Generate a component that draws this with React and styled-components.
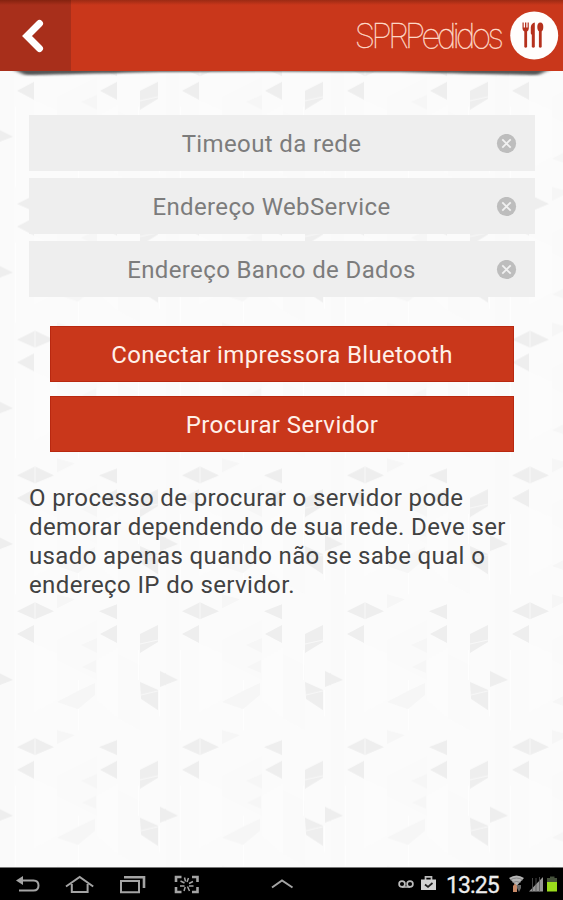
import React from "react";
import styled, { createGlobalStyle } from "styled-components";

const GlobalStyle = createGlobalStyle`
  * {
    box-sizing: border-box;
  }

  body {
    margin: 0;
    font-family: Roboto, "Noto Sans", sans-serif;
  }
`;

const StyledScreen = styled.div`
  position: relative;
  display: flex;
  flex-direction: column;
  width: 563px;
  height: 900px;
  overflow: hidden;
  background: #fbfbfb;
`;

const StyledBackdrop = styled.svg`
  position: absolute;
  top: 0;
  left: 0;
`;

const StyledHeader = styled.header`
  position: relative;
  display: flex;
  align-items: center;
  flex: none;
  height: 71px;
  padding-right: 4px;
  background: linear-gradient(#9c2a14 0, #c9371b 5px, #c9371b 100%);
`;

const StyledShadow = styled.svg`
  position: absolute;
  top: 70px;
  left: 0;
`;

const StyledBack = styled.button`
  display: flex;
  align-items: center;
  width: 71px;
  height: 71px;
  padding: 0 0 0 20px;
  border: 0;
  background: linear-gradient(#84220f 0, #a82f1b 5px, #a82f1b 100%);
`;

const StyledLogo = styled.span`
  margin-left: auto;
  margin-right: 10px;
  color: #ffdccb;
  font-family: Inter, sans-serif;
  font-size: 34px;
  font-weight: 100;
  line-height: 40px;
  letter-spacing: -4px;
  white-space: nowrap;
  -webkit-text-stroke: 0.3px #ffdccb;
`;

const StyledMain = styled.main`
  position: relative;
  flex: 1;
  padding: 44px 28px 0 29px;
`;

const StyledFields = styled.div`
  display: flex;
  flex-direction: column;
  gap: 7px;
`;

const StyledField = styled.div`
  display: flex;
  align-items: center;
  height: 56px;
  padding: 2px 18px 0;
  background: #eeeeee;
  color: #7c7c7c;
  font-size: 24px;
  letter-spacing: 0.37px;

  span {
    flex: 1;
    text-align: center;
    white-space: nowrap;
  }
`;

const StyledActions = styled.div`
  display: flex;
  flex-direction: column;
  gap: 14px;
  margin: 29px 21px 0;
`;

const StyledButton = styled.button`
  height: 56px;
  padding: 2px 0 0;
  border: 1px solid #b92810;
  background: #c9371b;
  color: #fff0e9;
  font-family: inherit;
  font-size: 24px;
  letter-spacing: ${({ $spacing }) => $spacing}px;
`;

const StyledNote = styled.p`
  margin: 32px 0 0;
  color: #414141;
  font-size: 24px;
  line-height: 29px;
  letter-spacing: 0.37px;

  span {
    display: block;
    white-space: nowrap;
  }
`;

const StyledNavBar = styled.footer`
  position: relative;
  display: flex;
  flex: none;
  height: 33px;
  border-top: 1px solid #777;
  background: #000;
`;

const StyledNavIcons = styled.svg`
  flex: none;
`;

const StyledClock = styled.span`
  width: 58px;
  padding-left: 1px;
  color: #ededed;
  font-size: 23px;
  line-height: 35px;
  letter-spacing: -0.9px;
  white-space: nowrap;
  -webkit-text-stroke: 0.3px #ededed;
`;

const fields = [
  "Timeout da rede",
  "Endereço WebService",
  "Endereço Banco de Dados",
];

const note = [
  "O processo de procurar o servidor pode",
  "demorar dependendo de sua rede. Deve ser",
  "usado apenas quando não se sabe qual o",
  "endereço IP do servidor.",
];

const Backdrop = () => (
  <StyledBackdrop width="563" height="867" aria-hidden="true">
    <defs>
      <filter id="soften">
        <feGaussianBlur stdDeviation="0.7" />
      </filter>
      <pattern
        id="facets"
        width="165"
        height="135.8"
        patternUnits="userSpaceOnUse"
        patternTransform="translate(0 76.8)"
      >
        <g fill="#fafafa">
          <path d="M0 0H14V135.800H0zM57 20L97 0V60L57 40zM118 34L140 45V110L118 98z" />
        </g>
        <g fill="#fcfcfc">
          <path d="M34 23L57 34V80L34 92zM97 40L118 28V98L97 80z" />
        </g>
        <g fill="#fefefe">
          <path d="M15 30H16V110H15zM78 60H79V110H78zM138 30H139V60H138zM159 70H160V96H159z" />
        </g>
        <g fill="#f6f6f6" filter="url(#soften)">
          <path d="M81 25L97 18V33zM57 82L78 71L95 63V75L78 89zM57 110L75 115L57 124zM82 47L96 40V53z" />
        </g>
        <g fill="#eeeeee" filter="url(#soften)">
          <path d="M17 14L34 5V23zM100 14L117 5V23z" />
          <path d="M140 14L158 5V22L140 33zM140 62L158 70V90L141 79z" />
          <path d="M160 51L178 60L160 67zM-5 51L13 60L-5 67z" />
          <path d="M17 127L35 118L54 127L35 135zM99 127L117 120V135z" />
        </g>
        <path
          d="M140 24L158 20M141 75L158 71M35 118V135"
          stroke="#f8f8f8"
          strokeWidth="1"
        />
      </pattern>
    </defs>
    <rect width="563" height="867" fill="url(#facets)" />
  </StyledBackdrop>
);

const ClearIcon = () => (
  <svg width="21" height="21" viewBox="0 0 21 21">
    <circle cx="10.5" cy="9.5" r="9.6" fill="#bdbdbd" />
    <path
      d="M6.3 5.3l8.4 8.4M14.7 5.3l-8.4 8.4"
      stroke="#f1f1f1"
      strokeWidth="1.8"
    />
  </svg>
);

const Cutlery = () => (
  <svg width="49" height="49" viewBox="0 0 49 49">
    <circle cx="24.2" cy="24.5" r="24" fill="#fffdfc" />
    <g fill="#b5301c">
      <path d="M12.500 11.500h1.200v5h1.300v-5h1.300v5h1.300v-5h1.200v6q0 2-1.700 3V36q-1.400 1.600-2.800 0V20.500q-1.800-1-1.800-3z" />
      <path d="M24.800 11.500V36q-1.500 1.600-3 0V24l-1-1.500V16q.5-4 4-4.500z" />
      <ellipse cx="30.300" cy="16" rx="3" ry="4.600" />
      <path d="M28.900 19h2.800v17q-1.400 1.600-2.800 0z" />
    </g>
  </svg>
);

const SystemIcons = () => (
  <StyledNavIcons width="398" height="32" viewBox="0 0 398 32">
    <g fill="none" stroke="#a4a4a4" strokeWidth="2">
      <path d="M21 12.500h12.500q5 0 5 5t-5 5H19" />
      <path d="M66 18.500L79.700 9l13.500 9.500M71.800 16v8h15.800v-8" />
      <path d="M121 13h18v11.200h-18z" />
      <path d="M124 9.200h20V20" strokeWidth="2.6" />
      <path
        d="M176 14V9h5.500M192 9h5.500v5M197.500 19v5H192M181.500 24H176v-5"
        strokeWidth="2.6"
      />
      <path
        d="M184.500 9.500l1 4M188.500 10l-1.500 4M180.500 13l4 2M180 18h4.500M193 13.500l-4 2M193.500 18H189M184 23l1.200-4M189.500 23l-2-4.500"
        strokeWidth="1.500"
      />
      <path d="M272 19.500L282 12.500l10.500 7" />
    </g>
    <path d="M16 12.500L23 8v9z" fill="#a4a4a4" />
  </StyledNavIcons>
);

const Notifications = () => (
  <StyledNavIcons width="47" height="32" viewBox="398 0 47 32">
    <g fill="none" stroke="#bcbcbc" strokeWidth="1.7">
      <circle cx="402" cy="16" r="2.9" />
      <circle cx="410" cy="16" r="2.9" />
      <path d="M402 19h8M425.500 12V8.800h6V12" />
    </g>
    <path d="M421 11.500h15V22h-15z" fill="#d4d4d4" />
    <path d="M425 16.500l3 2.500 4.500-4" fill="none" stroke="#222" strokeWidth="1.7" />
  </StyledNavIcons>
);

const Signals = () => (
  <StyledNavIcons width="60" height="32" viewBox="503 0 60 32">
    <path d="M509 10q7.500-5 15 0l-7.500 8z" fill="#b5b5b5" />
    <path
      d="M510 12q6.500-4 13 0M512.500 14.500q4-2 8 0"
      fill="none"
      stroke="#777"
      strokeWidth="0.8"
    />
    <path d="M513 18l2-2.500 2 2.500v6h-4z" fill="#c98a68" />
    <path d="M517 17h4v3l-2 4-2-4z" fill="#666" />
    <path d="M529 23.500L543 9v14.500z" fill="#969696" />
    <path d="M532.500 10v14M536 10v14M539.500 9v15" stroke="#555" strokeWidth="0.8" />
    <path d="M547 14v-4h3V8.500h4.500V10h2.500v4z" fill="#45513b" />
    <path d="M547 14h10v9.500h-10z" fill="#9bdc1c" />
  </StyledNavIcons>
);

const App = () => (
  <StyledScreen>
    <GlobalStyle />
    <Backdrop />
    <StyledShadow width="563" height="12" aria-hidden="true">
      <defs>
        <filter id="blur" x="-5%" y="-50%" width="110%" height="200%">
          <feGaussianBlur stdDeviation="2.500 1.300" />
        </filter>
      </defs>
      <path
        d="M10 -2H553L538 5Q500 4.500 400 2Q280 1 160 2Q60 4.500 25 5z"
        fill="#555"
        filter="url(#blur)"
      />
    </StyledShadow>

    <StyledHeader>
      <StyledBack aria-label="Voltar">
        <svg width="26" height="36" viewBox="0 0 26 36">
          <path
            d="M19.500 5.500L7 18l12.500 12.500"
            fill="none"
            stroke="#fff"
            strokeWidth="7"
            strokeLinecap="round"
          />
        </svg>
      </StyledBack>
      <StyledLogo>SPRPedidos</StyledLogo>
      <Cutlery />
    </StyledHeader>

    <StyledMain>
      <StyledFields>
        {fields.map((label) => (
          <StyledField key={label}>
            <span>{label}</span>
            <ClearIcon />
          </StyledField>
        ))}
      </StyledFields>

      <StyledActions>
        <StyledButton $spacing={0.34}>Conectar impressora Bluetooth</StyledButton>
        <StyledButton $spacing={0.42}>Procurar Servidor</StyledButton>
      </StyledActions>

      <StyledNote>
        {note.map((line) => (
          <span key={line}>{line}</span>
        ))}
      </StyledNote>
    </StyledMain>

    <StyledNavBar>
      <SystemIcons />
      <Notifications />
      <StyledClock>13:25</StyledClock>
      <Signals />
    </StyledNavBar>
  </StyledScreen>
);

export default App;
